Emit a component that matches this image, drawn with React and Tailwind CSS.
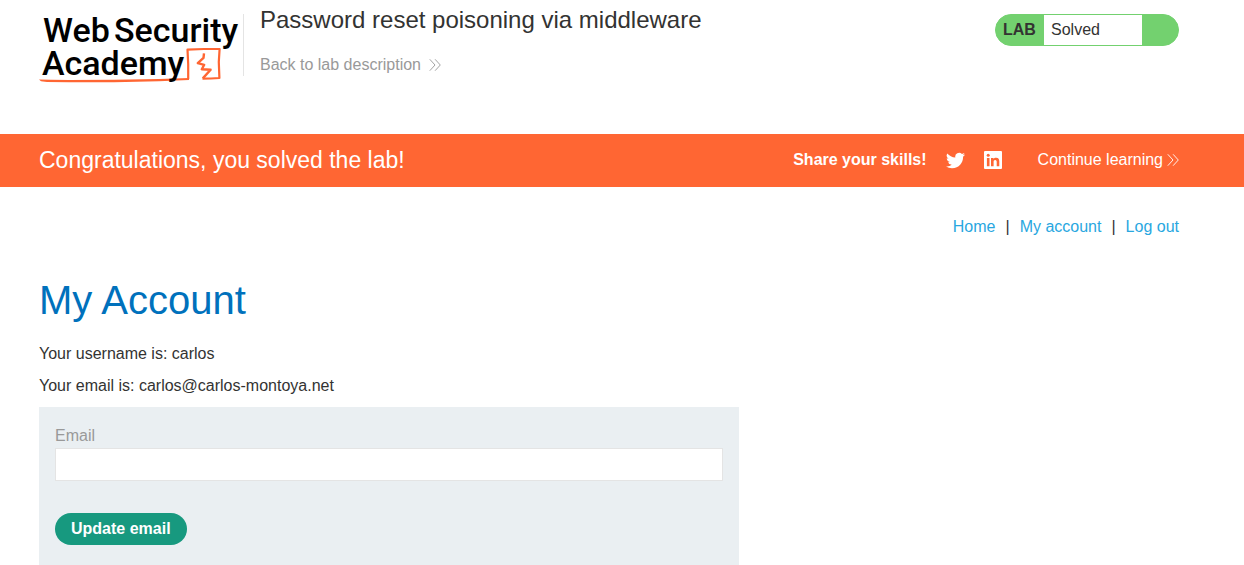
import React from "react";

function Chevrons({ className }) {
  return (
    <svg viewBox="0 0 12 12" className={className} fill="none" stroke="currentColor" strokeWidth="0.9" aria-hidden="true">
      <path d="M0.8 0.3 6 6 0.8 11.7M6.1 0.3 11.3 6 6.1 11.7" />
    </svg>
  );
}

function Logo() {
  return (
    <svg viewBox="0 0 205 76" className="block h-[76px] w-[205px] overflow-visible" role="img" aria-label="Web Security Academy">
      <g fill="none" stroke="#ff6633" strokeLinejoin="round">
        <path d="M149.200 65 149.200 50 148.500 35.600 165 35 180.600 35 179.800 48 180.400 64 172 64.500 163.500 64.600" strokeWidth="2.2" />
        <path d="M165 39.300 164.500 43.800 158.800 49.200 165.200 50.800 162.800 55.200 171.600 55.800 163.800 64.400" strokeWidth="2.4" />
      </g>
      <path d="M0 65.600 12 65.800 30 66 75 65.700 120 65 150 64 150 66 120 67.300 75 68.200 30 68.300 8 68 2 67.200Z" fill="#ff6633" />
      <g fill="#000" fontFamily="Roboto, sans-serif" fontWeight="500" fontSize="34">
        <text x="4" y="28">Web</text>
        <text x="75" y="28">Security</text>
        <text x="3" y="61">Academy</text>
      </g>
    </svg>
  );
}

function Twitter() {
  return (
    <svg viewBox="0 0 24 24" className="h-[19px] w-[19px]" fill="currentColor" aria-hidden="true">
      <path d="M23.95 4.57a10 10 0 0 1-2.82.77 4.96 4.96 0 0 0 2.16-2.72c-.95.55-2 .96-3.13 1.18a4.92 4.92 0 0 0-8.38 4.48C7.69 8.1 4.07 6.13 1.64 3.16a4.92 4.92 0 0 0 1.52 6.57 4.9 4.9 0 0 1-2.23-.61v.06c0 2.39 1.7 4.37 3.95 4.83a5 5 0 0 1-2.21.08 4.94 4.94 0 0 0 4.6 3.42A9.87 9.87 0 0 1 0 19.54a13.94 13.94 0 0 0 7.55 2.21c9.05 0 14-7.5 14-13.98 0-.21 0-.42-.02-.63a9.94 9.94 0 0 0 2.46-2.55z" />
    </svg>
  );
}

function LinkedIn() {
  return (
    <svg viewBox="0 0 18 18" className="h-[18px] w-[18px]" aria-hidden="true">
      <rect width="18" height="18" rx="1" fill="currentColor" />
      <g fill="#ff6633">
        <circle cx="4.2" cy="4.3" r="1.5" />
        <path d="M2.900 6.900h2.600v8.400H2.900zM7 6.900h2.500v1.200c.5-.9 1.400-1.400 2.600-1.400 2.500 0 3.200 1.500 3.200 3.800v4.800h-2.600v-4.200c0-1.200-.300-2.200-1.500-2.200-1.200 0-1.600.9-1.600 2.200v4.200H7z" />
      </g>
    </svg>
  );
}

export default function App() {
  return (
    <div className="bg-white text-base leading-6 text-[#333332] [font-family:'Liberation_Sans',Arial,sans-serif]">
      <header className="flex items-start pt-3.5 pr-[65px] pb-11 pl-[39px]">
        <a href="#academy" className="shrink-0">
          <Logo />
        </a>
        <div className="-ml-px h-[62px] border-l border-[#e4e4e4] pl-4">
          <h1 className="-mt-2 text-2xl leading-7">Password reset poisoning via middleware</h1>
          <a href="#description" className="mt-[19px] flex items-center gap-2 text-[#999999]">
            Back to lab description
            <Chevrons className="h-3 w-3" />
          </a>
        </div>
        <div className="ml-auto flex h-8 w-[184px] shrink-0 items-stretch overflow-hidden rounded-full border border-[#73d16f] bg-[#73d16f]">
          <span className="flex w-12 items-center pl-[7px] font-bold">LAB</span>
          <p className="flex w-[98px] items-center bg-white pl-[7px]">Solved</p>
        </div>
      </header>

      <section className="flex h-[53px] items-center bg-[#ff6633] pr-[65px] pb-px pl-[39px] text-white">
        <h2 className="mr-auto text-[23px]">Congratulations, you solved the lab!</h2>
        <span className="font-bold">Share your skills!</span>
        <a href="#twitter" aria-label="Twitter" className="ml-[19px]">
          <Twitter />
        </a>
        <a href="#linkedin" aria-label="LinkedIn" className="ml-[19px]">
          <LinkedIn />
        </a>
        <a href="#learning" className="ml-9 flex items-center gap-1">
          Continue learning
          <Chevrons className="h-3 w-3" />
        </a>
      </section>

      <main className="pr-[65px] pl-[39px]">
        <nav className="flex justify-end gap-2.5 pt-7">
          <a href="#home" className="text-[#29a7df]">Home</a>
          <span>|</span>
          <a href="#account" className="text-[#29a7df]">My account</a>
          <span>|</span>
          <a href="#logout" className="text-[#29a7df]">Log out</a>
        </nav>
        <h1 className="mt-9 text-[40px] leading-[50px] text-[#0071bc]">My Account</h1>
        <div className="mt-[17px] flex flex-col gap-2">
          <p>Your username is: carlos</p>
          <p>Your email is: carlos@carlos-montoya.net</p>
        </div>
        <form className="mt-[9px] max-w-[700px] bg-[#eaeff2] px-4 pt-[17px] pb-5" onSubmit={(e) => e.preventDefault()}>
          <label htmlFor="email" className="block text-[#999999]">Email</label>
          <input id="email" type="email" className="block h-[33px] w-full border border-[#e4e4e4] bg-white px-2 outline-none" />
          <button type="submit" className="mt-8 h-8 rounded-full bg-[#17997f] px-4 font-bold text-white">
            Update email
          </button>
        </form>
      </main>
    </div>
  );
}
